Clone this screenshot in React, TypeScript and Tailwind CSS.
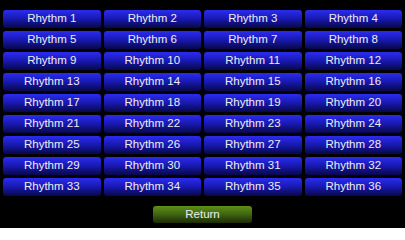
import React from 'react';

const rhythms = Array.from({ length: 36 }, (_, i) => `Rhythm ${i + 1}`);

const App: React.FC = () => {
  return (
    <div className="w-[405px] h-[228px] bg-black flex flex-col font-['Liberation_Sans',Arial,sans-serif] overflow-hidden">
      <div className="grid grid-cols-4 gap-x-[3px] gap-y-[3px] px-[3px] pt-[10px]">
        {rhythms.map((name) => (
          <button
            key={name}
            className="h-[18px] rounded-[3px] bg-gradient-to-b from-[#2c2cf0] via-[#1818b0] to-[#08084a] text-[11.5px] leading-none text-[#eeeeee] flex items-center justify-center"
          >
            {name}
          </button>
        ))}
      </div>
      <div className="flex justify-center pt-[10px]">
        <button className="w-[99px] h-[17px] rounded-[3px] bg-gradient-to-b from-[#5e9018] via-[#3f6410] to-[#1c2c06] text-[11.5px] leading-none text-[#eeeeee] flex items-center justify-center">
          Return
        </button>
      </div>
    </div>
  );
};

export default App;
